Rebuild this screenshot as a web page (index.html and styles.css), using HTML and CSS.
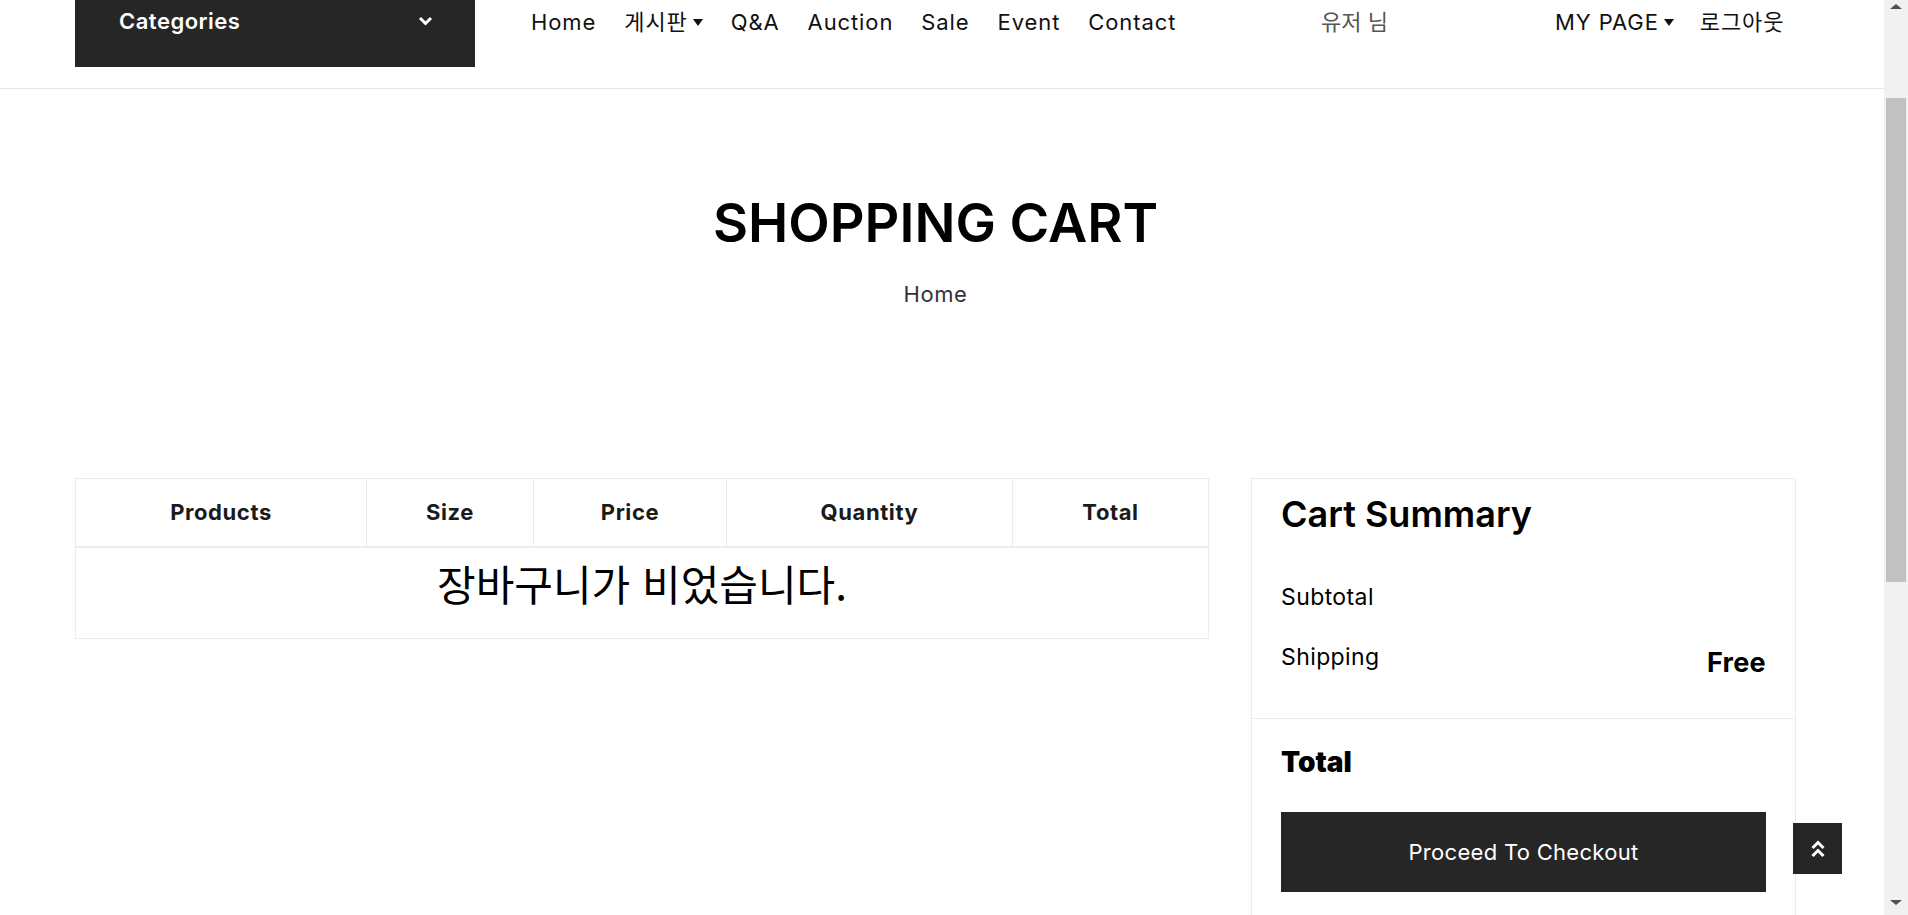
FILE: index.html
```html
<!DOCTYPE html>
<html lang="ko">
<head>
<meta charset="utf-8">
<title>Shopping Cart</title>
<link rel="stylesheet" href="styles.css">
</head>
<body>
<header class="header">
  <div class="categories">
    <span class="categories-label">Categories</span>
    <svg class="chev" width="15" height="10" viewBox="0 0 15 10"><polyline points="2,2 7.5,7.5 13,2" fill="none" stroke="#fff" stroke-width="3"/></svg>
  </div>
  <nav class="nav">
    <a class="nav-link">Home</a>
    <a class="nav-link dropdown">게시판</a>
    <a class="nav-link">Q&amp;A</a>
    <a class="nav-link">Auction</a>
    <a class="nav-link">Sale</a>
    <a class="nav-link">Event</a>
    <a class="nav-link">Contact</a>
  </nav>
  <div class="user">유저 님</div>
  <div class="account">
    <a class="nav-link dropdown">MY PAGE</a>
    <a class="nav-link">로그아웃</a>
  </div>
</header>

<section class="hero">
  <h1 class="hero-title">SHOPPING CART</h1>
  <div class="breadcrumb">Home</div>
</section>

<section class="cart">
  <div class="cart-table-wrap">
    <table class="cart-table">
      <thead>
        <tr>
          <th class="c-prod">Products</th>
          <th class="c-size">Size</th>
          <th class="c-price">Price</th>
          <th class="c-qty">Quantity</th>
          <th class="c-total">Total</th>
        </tr>
      </thead>
      <tbody>
        <tr>
          <td colspan="5" class="empty"><h3 class="empty-text">장바구니가 비었습니다.</h3></td>
        </tr>
      </tbody>
    </table>
  </div>
  <aside class="summary">
    <div class="summary-top">
      <h2 class="summary-title">Cart Summary</h2>
      <div class="summary-row">
        <span>Subtotal</span>
        <span></span>
      </div>
      <div class="summary-row">
        <span>Shipping</span>
        <strong class="free">Free</strong>
      </div>
    </div>
    <div class="summary-bottom">
      <div class="total-row"><strong>Total</strong></div>
      <button class="checkout">Proceed To Checkout</button>
    </div>
  </aside>
</section>

<a class="to-top">
  <svg width="16" height="20" viewBox="0 0 16 20"><polyline points="2.5,9 8,3.5 13.5,9" fill="none" stroke="#fff" stroke-width="3"/><polyline points="2.5,17 8,11.5 13.5,17" fill="none" stroke="#fff" stroke-width="3"/></svg>
</a>

<div class="scrollbar">
  <span class="sb-arrow sb-up"></span>
  <div class="sb-track"><div class="sb-thumb"></div></div>
  <span class="sb-arrow sb-down"></span>
</div>
</body>
</html>
```
FILE: styles.css
```css
* { box-sizing: border-box; }
html, body { margin: 0; padding: 0; }
html { overflow: hidden; }
body {
  font-family: Inter, "Noto Sans CJK KR", sans-serif;
  color: #111;
  background: #fff;
  width: 1884px;
}

.header {
  display: flex;
  align-items: flex-start;
  height: 89px;
  border-bottom: 1px solid #e6e6e6;
  padding-left: 75px;
}
.categories {
  width: 400px;
  height: 67px;
  background: #262626;
  color: #fff;
  display: flex;
  justify-content: space-between;
  align-items: flex-start;
  padding: 7px 42px 0 44px;
}
.categories-label {
  font-size: 22px;
  font-weight: 600;
  line-height: 28px;
  letter-spacing: 0.5px;
}
.chev { margin-top: 9px; }

.nav {
  display: flex;
  gap: 28px;
  width: 790px;
  margin-left: 56px;
  padding-top: 8px;
}
.nav-link {
  font-size: 22px;
  line-height: 28px;
  color: #111;
  letter-spacing: 0.9px;
  white-space: nowrap;
}
.dropdown::after {
  content: "";
  display: inline-block;
  margin-left: 5px;
  vertical-align: 4px;
  border-top: 7px solid #111;
  border-left: 5px solid transparent;
  border-right: 5px solid transparent;
}
.user {
  width: 234px;
  padding-top: 8px;
  font-size: 22px;
  line-height: 28px;
  color: #555;
}
.account {
  display: flex;
  gap: 26px;
  padding-top: 8px;
}

.hero {
  width: 1721px;
  margin-left: 75px;
  text-align: center;
  padding-top: 101px;
}
.hero-title {
  margin: 0;
  font-size: 54px;
  line-height: 65px;
  font-weight: 600;
  color: #000;
}
.breadcrumb {
  margin-top: 26px;
  font-size: 22px;
  line-height: 26px;
  letter-spacing: 0.6px;
  color: #333;
}

.cart {
  display: flex;
  gap: 43px;
  align-items: flex-start;
  width: 1721px;
  margin: 171px 0 0 75px;
}
.cart-table-wrap { width: 1133px; }
.cart-table {
  width: 100%;
  border-collapse: collapse;
  table-layout: fixed;
  border: 1px solid #ebebf6;
}
.cart-table th {
  height: 68px;
  font-size: 22px;
  font-weight: 700;
  color: #1a1a1a;
  border: 1px solid #ebebf6;
  border-bottom: 2px solid #ebebf6;
  text-align: center;
  padding: 0;
  letter-spacing: 0.6px;
}
.c-prod { width: 291px; }
.c-size { width: 167px; }
.c-price { width: 193px; }
.c-qty { width: 286px; }
.c-total { width: 196px; }
.empty {
  height: 92px;
  text-align: center;
  padding: 10px 0 0 0;
  vertical-align: top;
}
.empty-text {
  margin: 0;
  font-family: "Noto Sans CJK KR", sans-serif;
  font-weight: 400;
  font-size: 42px;
  line-height: 50px;
  color: #000;
}

.summary {
  width: 545px;
  border: 1px solid #ebebf6;
}
.summary-top {
  padding: 13px 29px 40px;
  border-bottom: 1px solid #ebebf6;
}
.summary-title {
  margin: 0 0 46px;
  font-size: 36px;
  line-height: 44px;
  font-weight: 600;
  color: #000;
}
.summary-row {
  display: flex;
  justify-content: space-between;
  align-items: flex-start;
  font-size: 23px;
  line-height: 30px;
  letter-spacing: 0.4px;
  color: #000;
}
.summary-row + .summary-row { margin-top: 30px; }
.free {
  font-size: 27px;
  font-weight: 700;
  line-height: 30px;
  letter-spacing: 0.3px;
  margin-top: 6px;
}
.summary-bottom {
  padding: 26px 29px 40px;
}
.total-row {
  font-size: 28px;
  line-height: 34px;
  font-weight: 700;
  color: #000;
}
.checkout {
  display: block;
  width: 100%;
  height: 80px;
  margin-top: 33px;
  border: 0;
  background: #262626;
  color: #fff;
  font-family: Inter, sans-serif;
  font-size: 22px;
  letter-spacing: 0.3px;
}

.to-top {
  position: fixed;
  right: 66px;
  bottom: 41px;
  width: 49px;
  height: 51px;
  background: #262626;
  display: flex;
  align-items: center;
  justify-content: center;
}

.scrollbar {
  position: fixed;
  top: 0;
  right: 0;
  width: 24px;
  height: 100%;
  background: #f0f0f0;
  display: flex;
  flex-direction: column;
  align-items: center;
}
.sb-arrow {
  width: 0;
  height: 0;
  border-left: 6px solid transparent;
  border-right: 6px solid transparent;
}
.sb-up { margin-top: 4px; border-bottom: 5px solid #505050; }
.sb-down { margin-bottom: 10px; border-top: 5px solid #505050; }
.sb-track {
  flex: 1;
  width: 100%;
  padding: 89px 0 0 2px;
}
.sb-thumb {
  width: 20px;
  height: 484px;
  background: #c1c1c1;
}
```
